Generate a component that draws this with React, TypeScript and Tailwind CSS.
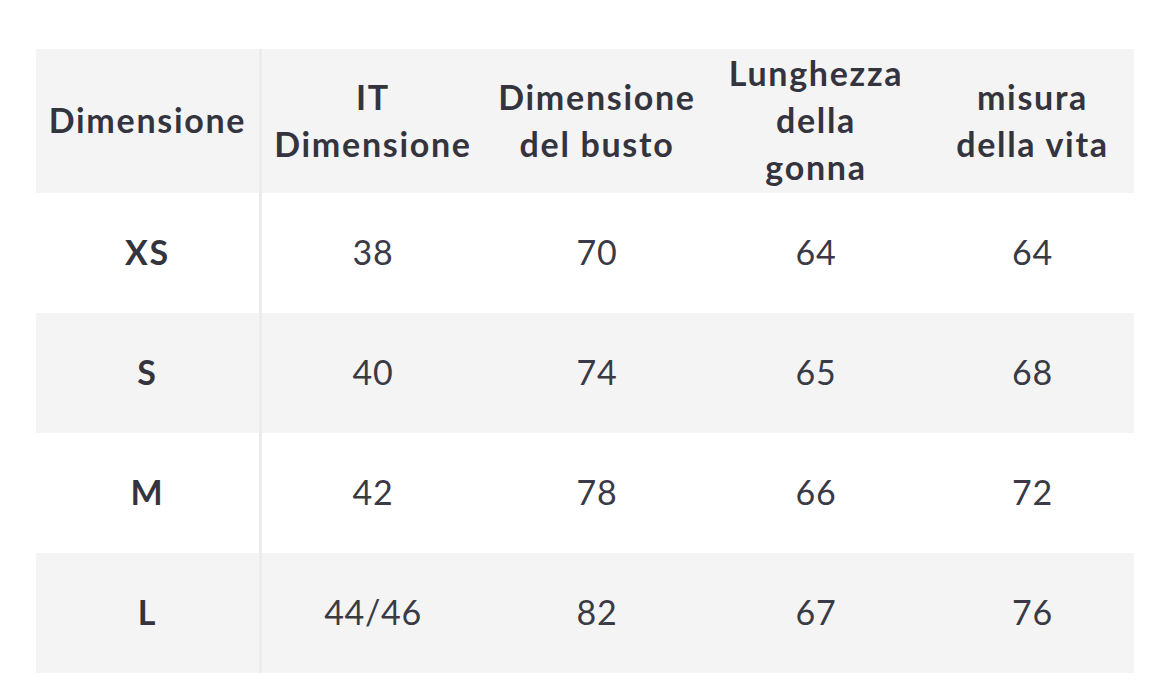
const header = [
  ['Dimensione'],
  ['IT', 'Dimensione'],
  ['Dimensione', 'del busto'],
  ['Lunghezza', 'della', 'gonna'],
  ['misura', 'della vita'],
]

const rows = [
  ['XS', '38', '70', '64', '64'],
  ['S', '40', '74', '65', '68'],
  ['M', '42', '78', '66', '72'],
  ['L', '44/46', '82', '67', '76'],
]

const cols = 'grid grid-cols-[223px_3px_222px_226px_212px_212px]'

export default function App() {
  return (
    <div
      className="h-[686px] w-[1170px] bg-white pt-[49px] pl-[36px] text-[#34343f]"
      style={{ fontFamily: 'Lato, "Noto Sans", sans-serif' }}
    >
      <div className="w-[1098px]">
        <div className={`${cols} h-[144px] bg-[#f4f4f4]`}>
          {header.map((lines, i) => (
            <>
              {i === 1 && <div key="sep" className="bg-[#ebebeb]" />}
              <div
                key={i}
                className={`-mt-[3px] flex flex-col items-center justify-center whitespace-nowrap text-center text-[34px] leading-[47px] font-bold tracking-[0.05em] ${i === 4 ? 'pl-[9px]' : ''}`}
              >
                {lines.map((l) => (
                  <span key={l}>{l}</span>
                ))}
              </div>
            </>
          ))}
        </div>
        {rows.map((r, ri) => (
          <div
            key={ri}
            className={`${cols} h-[120px] ${ri % 2 === 1 ? 'bg-[#f4f4f4]' : 'bg-white'}`}
          >
            {r.map((c, ci) => (
              <>
                {ci === 1 && <div key="sep" className="bg-[#ebebeb]" />}
                <div
                  key={ci}
                  className={`-mt-[3px] flex items-center justify-center text-[34px] ${ci === 0 ? 'font-bold tracking-[0.05em]' : 'font-normal tracking-[0.02em] text-[#3a3a46]'} ${ci === 4 ? 'pl-[9px]' : ''}`}
                >
                  {c}
                </div>
              </>
            ))}
          </div>
        ))}
      </div>
    </div>
  )
}
